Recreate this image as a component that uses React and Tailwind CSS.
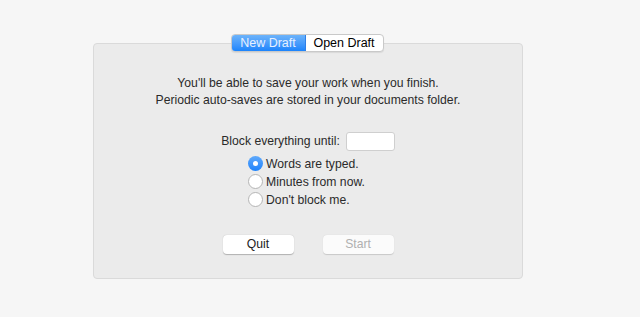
export default function App() {
  const font = { fontFamily: '"Helvetica Neue", "Liberation Sans", Arial, sans-serif' };

  return (
    <div className="w-[640px] h-[317px] bg-[#f6f6f6] pt-[43px] pl-[93px] text-[#2a2a2a]" style={font}>
      <div className="w-[430px] h-[236px] bg-[#ebebeb] border border-[#dadada] rounded-[4px] flex flex-col items-center">
        {/* segmented control */}
        <div className="-mt-[10px] ml-[-2px] flex h-[18px] rounded-[4px] border border-[#c9c9c9] bg-white text-[12.5px] leading-[16px] shadow-[0_1px_1px_rgba(0,0,0,0.08)] overflow-hidden">
          <div className="w-[74px] flex items-center justify-center bg-gradient-to-b from-[#6cb3fa] to-[#1a84fc] text-[#e6f0ff] border-r border-[#2f7fe6]">
            New Draft
          </div>
          <div className="w-[77px] flex items-center justify-center text-black">
            Open Draft
          </div>
        </div>

        {/* info text */}
        <div className="mt-[23px] text-center text-[12.2px] leading-[17px]">
          <p>You'll be able to save your work when you finish.</p>
          <p>Periodic auto-saves are stored in your documents folder.</p>
        </div>

        {/* block until */}
        <div className="mt-[23px] flex items-center gap-[6px] text-[12.2px]">
          <span>Block everything until:</span>
          <div className="w-[49px] h-[19px] bg-white border border-[#cfcfcf] rounded-[3px]" />
        </div>

        {/* radio options */}
        <div className="mt-[5px] flex flex-col gap-[3px] text-[12.2px] leading-[14px] ml-[-3px]">
          <label className="flex items-center gap-[3px]">
            <span className="w-[15px] h-[15px] rounded-full bg-gradient-to-b from-[#5ea9fb] to-[#1b82fb] flex items-center justify-center">
              <span className="w-[5px] h-[5px] rounded-full bg-white" />
            </span>
            Words are typed.
          </label>
          <label className="flex items-center gap-[3px]">
            <span className="w-[15px] h-[15px] rounded-full bg-white border border-[#b5b5b5]" />
            Minutes from now.
          </label>
          <label className="flex items-center gap-[3px]">
            <span className="w-[15px] h-[15px] rounded-full bg-white border border-[#b5b5b5]" />
            Don't block me.
          </label>
        </div>

        {/* buttons */}
        <div className="mt-[28px] flex gap-[29px] text-[12.2px]">
          <button className="w-[71px] h-[19px] bg-white rounded-[4px] shadow-[0_0.5px_1px_rgba(0,0,0,0.25)] text-[#222]">
            Quit
          </button>
          <button className="w-[71px] h-[19px] bg-[#fbfbfb] rounded-[4px] shadow-[0_0.5px_1px_rgba(0,0,0,0.15)] text-[#b0b0b0]">
            Start
          </button>
        </div>
      </div>
    </div>
  );
}
